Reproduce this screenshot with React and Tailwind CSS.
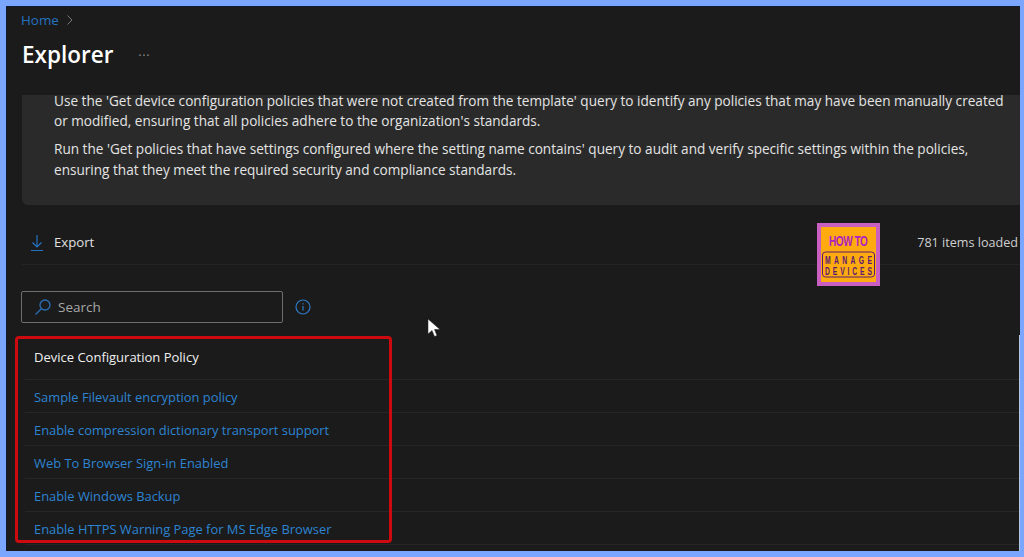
function Row({ children, header }) {
  return (
    <div className={`flex items-center ml-[3px] pl-[9px] border-b border-[#262626] ${header ? "h-[45px] pt-[1px] text-[13px] font-medium text-[#f0f0f0]" : "h-[33px] pt-[3px] text-[12.9px] font-medium text-[#2d84d2]"}`}>
      {children}
    </div>
  );
}

function Logo() {
  const ink = "#5a1a70";
  return (
    <div className="w-[63px] h-[63px] bg-[#c95fc0] p-[4px] shrink-0">
      <svg viewBox="0 0 55 55" className="w-full h-full block bg-[#ffab0f]">
        <text transform="translate(27.5 19) scale(0.72 1)" textAnchor="middle" textLength="54" lengthAdjust="spacing" fontFamily="Liberation Sans" fontWeight="700" fontSize="14" fill="#b022c0">HOW TO</text>
        <rect x="1.5" y="25" width="52" height="25" rx="3" fill="none" stroke={ink} strokeWidth="1" />
        <text transform="translate(27.5 36.500) scale(0.62 1)" textAnchor="middle" textLength="76" lengthAdjust="spacing" fontFamily="Liberation Sans" fontWeight="700" fontSize="11" fill={ink}>MANAGE</text>
        <text transform="translate(27.5 47.500) scale(0.62 1)" textAnchor="middle" textLength="76" lengthAdjust="spacing" fontFamily="Liberation Sans" fontWeight="700" fontSize="11" fill={ink}>DEVICES</text>
      </svg>
    </div>
  );
}

export default function App() {
  return (
    <div className="h-[557px] w-[1024px] overflow-hidden bg-[#7ba6ff] pt-[6px] pl-[6px] pr-[4px] pb-[6px] font-['Open_Sans','Noto_Sans',sans-serif]">
      <div className="relative h-full bg-[#1b1b1b] overflow-hidden border-t border-l border-[#101a2e] pl-[15px]">
        <div className="flex items-center h-[26px] -ml-[1px] text-[13.4px] text-[#2472c0] gap-[7px]">
          <span>Home</span>
          <svg width="8" height="12" viewBox="0 0 8 12" fill="none" stroke="#777" strokeWidth="1"><path d="M1.5 1.5 6 6l-4.500 4.500" /></svg>
        </div>
        <div className="flex items-center h-[44px]">
          <h1 className="text-[22.5px] font-semibold text-white leading-none">Explorer</h1>
          <span className="ml-[25px] text-[#8a8a8a] text-[13px] leading-none tracking-[0.5px]">···</span>
        </div>
        <div className="mt-[18px] h-[110px] bg-[#2a2a2a] rounded-bl-[6px] pl-[32px] text-[13.6px] leading-[20.500px] text-[#e4e4e4]">
          <p className="leading-[12px] mb-[4.250px] whitespace-nowrap">Use the 'Get device configuration policies that were not created from the template' query to identify any policies that may have been manually created</p>
          <p className="whitespace-nowrap">or modified, ensuring that all policies adhere to the organization's standards.</p>
          <p className="whitespace-nowrap mt-[7.500px]">Run the 'Get policies that have settings configured where the setting name contains' query to audit and verify specific settings within the policies,</p>
          <p className="whitespace-nowrap">ensuring that they meet the required security and compliance standards.</p>
        </div>
        <div className="flex items-center h-[60px] pt-[17px] border-b border-[#242424] pl-[8px] relative">
          <svg width="14" height="18" viewBox="0 0 14 18" fill="none" stroke="#2472c0" strokeWidth="1.200"><path d="M7 1v12M2.500 8.500 7 13l4.500-4.500M1 16.500h12" /></svg>
          <span className="ml-[10px] text-[13.2px] text-[#e0e0e0]">Export</span>
          <span className="ml-auto mr-[2px] text-[12.6px] text-[#cfcfcf] whitespace-nowrap">781 items loaded</span>
          <div className="absolute left-[795px] top-[18px]"><Logo /></div>
        </div>
        <div className="flex items-center mt-[26px] -ml-[1px] gap-[12px]">
          <div className="w-[262px] h-[32px] border border-[#6e6e6e] rounded-[2px] flex items-center pl-[12px] gap-[6px]">
            <svg width="18" height="18" viewBox="0 0 18 18" fill="none" stroke="#2a6fb5" strokeWidth="1.300"><circle cx="11" cy="7" r="5" /><path d="M7.300 10.700 1.500 16.500" /></svg>
            <span className="text-[13.5px] text-[#a8a8a8]">Search</span>
          </div>
          <svg width="16" height="16" viewBox="0 0 16 16" fill="none" stroke="#2e7cc8" strokeWidth="1.200"><circle cx="8" cy="8" r="7" /><path d="M8 7v4.500M8 4.300v1.200" /></svg>
        </div>
        <div className="mt-[12px]">
          <Row header>Device Configuration Policy</Row>
          <Row>Sample Filevault encryption policy</Row>
          <Row>Enable compression dictionary transport support</Row>
          <Row>Web To Browser Sign-in Enabled</Row>
          <Row>Enable Windows Backup</Row>
          <Row>Enable HTTPS Warning Page for MS Edge Browser</Row>
        </div>
        <div className="absolute left-[8px] top-[329px] w-[377px] h-[207px] border-[3px] border-[#cc0a10] rounded-[4px]" />
        <div className="absolute right-0 top-[328px] bottom-0 w-[1px] bg-[#b4c6e6]" />
        <svg className="absolute left-[420px] top-[311px]" width="14" height="20" viewBox="0 0 14 20"><path d="M1 1v15l4-3.500 2.500 6 2.500-1-2.500-6H13z" fill="#fff" stroke="#222" strokeWidth="0.500" /></svg>
      </div>
    </div>
  );
}
